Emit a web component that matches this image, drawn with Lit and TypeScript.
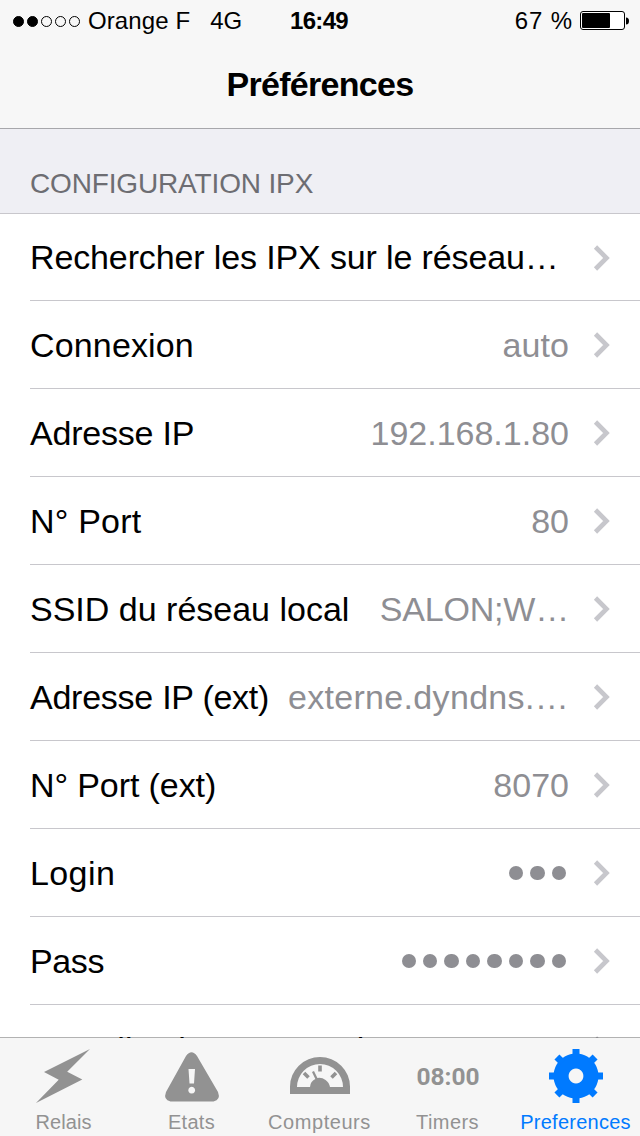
import { LitElement, html, svg, css, nothing } from "lit";
import { customElement } from "lit/decorators.js";
import { classMap } from "lit/directives/class-map.js";

interface Row { label: string; value?: string; dots?: number; ls?: number; vls?: number; }
interface Tab { label: string; icon: string; ls?: number; active?: boolean; }

const ROWS: Row[] = [
  { label: "Rechercher les IPX sur le réseau…", ls: -0.13 },
  { label: "Connexion", ls: 0.15, value: "auto", vls: 0.1 },
  { label: "Adresse IP", ls: -0.2, value: "192.168.1.80" },
  { label: "N° Port", ls: 0.2, value: "80" },
  { label: "SSID du réseau local", value: "SALON;W…", vls: -0.2 },
  { label: "Adresse IP (ext)", ls: -0.25, value: "externe.dyndns.…", vls: 0.32 },
  { label: "N° Port (ext)", ls: -0.1, value: "8070" },
  { label: "Login", ls: 0.4, dots: 3 },
  { label: "Pass", ls: -0.4, dots: 8 },
  { label: "Actualisation automatique", ls: 0.08 },
];

const TABS: Tab[] = [
  { label: "Relais", icon: "bolt", ls: 0.1 },
  { label: "Etats", icon: "warning", ls: 0.3 },
  { label: "Compteurs", icon: "gauge", ls: 0.55 },
  { label: "Timers", icon: "clock", ls: 0.4 },
  { label: "Preferences", icon: "gear", ls: 0.25, active: true },
];

const GLYPHS: Record<string, unknown> = {
  bolt: svg`<path d="M54 1 L8 24 L22.700 31.700 L0 55 L46.300 31.500 L31.200 23.700 Z" transform="translate(-1 0)"/>`,
  warning: svg`<path fill-rule="evenodd" d="M21.500 5 Q27 -2.500 32.500 5 L53.500 41 Q56.500 49 49 50.500 H6 Q-1.500 49 1.500 41 Z M24 18 L25 32.500 H29.500 L30.500 18 Z M27.200 35.800 a3.400 3.400 0 1 0 0.010 0 Z"/>`,
  gauge: svg`<path fill-rule="evenodd" d="M0 46 V38.500 A30 29.500 0 0 1 60 38.500 V46 Z M7 39 H20 A10 9.500 0 0 1 25.300 31 L22 24 L24 23 L27.400 30 A11 11 0 0 1 40 39 H53 A23 23 0 0 0 7 39 Z"/>
    <path fill="none" stroke="currentColor" stroke-width="3.600" d="M30 17.500 V23.500 M14 25 L18.500 29.500 M46 25 L41.500 29.500"/>`,
  gear: svg`<path fill-rule="evenodd" d="M27 5.500 a22.500 22.500 0 1 0 0.010 0 Z M27 20.600 a7.400 7.400 0 1 1 -0.010 0 Z"/>
    ${[0, 45, 90, 135, 180, 225, 270, 315].map(a => svg`<rect x="23.500" y="1" width="7" height="8" transform="rotate(${a} 27 28)"/>`)}`,
};

@customElement("app-root")
export class AppRoot extends LitElement {
  static styles = css`
    :host { display: flex; flex-direction: column; width: 640px; height: 1136px; overflow: hidden;
      background: #fff; color: #000; font-family: "Liberation Sans", Arial, sans-serif; }
    * { box-sizing: border-box; }
    span { white-space: pre; }
    .top { flex: none; height: 129px; background: #f7f7f7; border-bottom: 1px solid #a7a7ab; }
    .status { display: grid; grid-template-columns: 1fr auto 1fr; align-items: center; height: 40px;
      padding: 1px 11px 0 13px; font-size: 24px; line-height: 40px; }
    .left, .right { display: flex; align-items: center; }
    .right { justify-content: flex-end; }
    .signal { display: flex; gap: 3px; margin-right: 8px; }
    .signal i { width: 11px; height: 11px; border: 1px solid #000; border-radius: 50%; }
    .signal .on { background: #000; }
    .carrier { letter-spacing: 0.1px; }
    .net { margin-left: 20px; }
    .time { font-weight: 700; letter-spacing: -0.700px; padding-right: 4px; }
    .pct { letter-spacing: 0.900px; margin-right: 7px; }
    .battery { display: block; width: 49px; height: 20px; }
    .title { margin: 0; text-align: center; font-size: 34px; line-height: 40px; padding-top: 24px; font-weight: 700; letter-spacing: -0.700px; }
    .section { flex: none; height: 85px; padding: 37px 30px 0; background: #efeff4; border-bottom: 1px solid #c8c7cc;
      color: #6d6d72; font-size: 28px; line-height: 36px; letter-spacing: -0.150px; }
    .list { flex: 1; min-height: 0; overflow: hidden; }
    .row { display: flex; align-items: center; height: 88px; margin-left: 30px; padding-right: 30px;
      border-bottom: 1px solid #c8c7cc; font-size: 34px; line-height: 40px; }
    .row:first-child { height: 87px; }
    .label { flex: 1; }
    .value { color: #8e8e93; margin-right: 24px; }
    .dots { display: flex; gap: 6.930px; margin-right: 27px; padding-top: 1px; }
    .dots i { width: 14.500px; height: 14.500px; border-radius: 50%; background: #8e8e93; }
    .chev { width: 17px; height: 27px; fill: none; stroke: #c7c7cc; stroke-width: 4.600; }
    .tabs { flex: none; position: relative; display: grid; grid-template-columns: repeat(5, 1fr); height: 99px; margin-top: -1px;
      border-top: 1px solid rgba(0, 0, 0, 0.3); background: #f6f6f6; background-clip: padding-box; color: #929292; }
    .tab { display: flex; flex-direction: column; align-items: center; padding-top: 10px; }
    .tab.active { color: #007aff; }
    .glyph { width: 60px; height: 56px; fill: currentColor; overflow: visible; }
    .digits { height: 56px; font: 700 24.500px/58px Roboto, sans-serif; }
    .name { font-size: 20px; line-height: 24px; margin-top: 6px; padding-right: 1px; }
  `;

  private glyph(icon: string) {
    if (icon === "clock") return html`<span class="digits">08:00</span>`;
    const box = icon === "gauge" ? "0 0 60 56" : icon === "warning" ? "-2.5 -3 60 56" : "-3 0 60 56";
    return html`<svg class="glyph" viewBox=${box}>${GLYPHS[icon]}</svg>`;
  }

  render() {
    return html`
      <header class="top">
        <div class="status">
          <div class="left">
            <div class="signal">${[1, 1, 0, 0, 0].map(on => html`<i class=${classMap({ on: !!on })}></i>`)}</div>
            <span class="carrier">Orange F</span><span class="net">4G</span>
          </div>
          <span class="time">16:49</span>
          <div class="right">
            <span class="pct">67 %</span>
            <svg class="battery" viewBox="0 0 49 20">
              <rect x="0.500" y="0.500" width="44" height="18" rx="2.500" fill="#fff" stroke="#000"/>
              <rect x="2" y="2" width="28" height="15" rx="1"/>
              <path d="M46 6.500 q3 0 3 3.500 t-3 3.500 Z"/>
            </svg>
          </div>
        </div>
        <h1 class="title">Préférences</h1>
      </header>
      <div class="section">CONFIGURATION IPX</div>
      <main class="list">
        ${ROWS.map(r => html`
          <div class="row">
            <span class="label" style="letter-spacing:${r.ls ?? 0}px">${r.label}</span>
            ${r.value ? html`<span class="value" style="letter-spacing:${r.vls ?? 0}px">${r.value}</span>` : nothing}
            ${r.dots ? html`<div class="dots">${Array.from({ length: r.dots }, () => html`<i></i>`)}</div>` : nothing}
            <svg class="chev" viewBox="0 0 17 27"><path d="M2.500 3 L13.500 14 L2.500 25"/></svg>
          </div>`)}
      </main>
      <nav class="tabs">
        ${TABS.map(t => html`
          <div class=${classMap({ tab: true, active: !!t.active })}>
            ${this.glyph(t.icon)}
            <span class="name" style="letter-spacing:${t.ls ?? 0}px">${t.label}</span>
          </div>`)}
      </nav>`;
  }
}
